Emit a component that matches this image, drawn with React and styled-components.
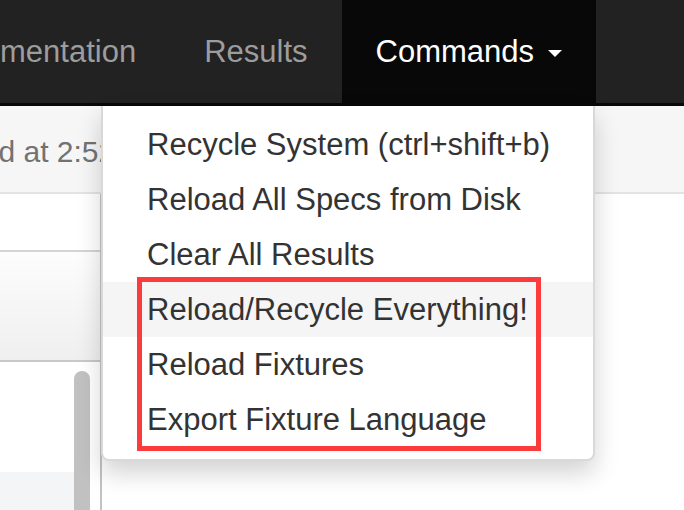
import styled, { createGlobalStyle } from "styled-components";

const commands = [
  "Recycle System (ctrl+shift+b)",
  "Reload All Specs from Disk",
  "Clear All Results",
  "Reload/Recycle Everything!",
  "Reload Fixtures",
  "Export Fixture Language",
];

const App = () => {
  return (
    <Page>
      <GlobalStyle />
      <Navbar>
        <NavItem>Documentation</NavItem>
        <NavItem>Results</NavItem>
        <NavItem $active>
          Commands
          <Caret />
          <DropdownMenu>
            {commands.map((label, i) => (
              <MenuItem key={label} $hover={i === 3}>
                {label}
              </MenuItem>
            ))}
            <Highlight />
          </DropdownMenu>
        </NavItem>
      </Navbar>
      <StatusBar>
        <StatusText>Loaded at 2:52 PM</StatusText>
      </StatusBar>
      <Body>
        <Sidebar>
          <SideRow />
          <SideHeader />
          <SideList>
            <ListColumn>
              <ListItem />
              <ListItem $alt />
            </ListColumn>
            <ScrollTrack>
              <ScrollThumb />
            </ScrollTrack>
          </SideList>
        </Sidebar>
        <Main />
      </Body>
    </Page>
  );
};

const GlobalStyle = createGlobalStyle`
  body {
    margin: 0;
    overflow: hidden;
    font-family: "Liberation Sans", Arial, sans-serif;
  }
`;

const Page = styled.div`
  display: flex;
  flex-direction: column;
  min-height: 100vh;
  background: #fff;
`;

// dark top navigation, items pushed to the right
const Navbar = styled.nav`
  position: relative;
  z-index: 10;
  display: flex;
  justify-content: flex-end;
  height: 103px;
  padding-right: 88px;
  background: #222;
  border-bottom: 3px solid #080808;
  overflow: visible;
  white-space: nowrap;
`;

const NavItem = styled.div`
  position: relative;
  display: flex;
  align-items: center;
  flex-shrink: 0;
  padding: 0 34px;
  font-size: 31px;
  color: ${(p) => (p.$active ? "#fff" : "#9d9d9d")};
  background: ${(p) => (p.$active ? "#080808" : "transparent")};
`;

const Caret = styled.span`
  margin-left: 14px;
  margin-top: 3px;
  width: 0;
  height: 0;
  border-left: 7px solid transparent;
  border-right: 7px solid transparent;
  border-top: 7px solid #fff;
`;

const DropdownMenu = styled.div`
  position: absolute;
  top: calc(100% + 3px);
  right: 1px;
  width: 490px;
  padding: 11px 0 12px;
  background: #fff;
  border: 2px solid rgba(0, 0, 0, 0.15);
  border-top: none;
  border-radius: 0 0 8px 8px;
  box-shadow: 0 12px 24px rgba(0, 0, 0, 0.175);
`;

const MenuItem = styled.div`
  display: flex;
  align-items: center;
  height: 55px;
  padding-left: 44px;
  font-size: 31px;
  color: #333;
  background: ${(p) => (p.$hover ? "#f5f5f5" : "transparent")};
`;

// red annotation drawn over the last three commands
const Highlight = styled.div`
  position: absolute;
  left: 34px;
  top: 171px;
  width: 394px;
  height: 164px;
  border: 5px solid #fc3c3c;
`;

const StatusBar = styled.div`
  display: flex;
  align-items: center;
  height: 86px;
  background: #f6f6f6;
  border-bottom: 2px solid #e3e3e3;
  overflow: hidden;
`;

const StatusText = styled.span`
  margin-left: -85px;
  margin-top: 6px;
  font-size: 30px;
  color: #727272;
  white-space: nowrap;
`;

const Body = styled.div`
  flex: 1;
  display: flex;
`;

const Sidebar = styled.aside`
  display: flex;
  flex-direction: column;
  width: 100px;
  border-right: 2px solid #c2c2c2;
`;

const SideRow = styled.div`
  height: 56px;
  background: #fff;
  border-bottom: 2px solid #d4d4d4;
`;

const SideHeader = styled.div`
  height: 108px;
  background: linear-gradient(#fdfdfd, #efefef);
  border-bottom: 2px solid #c8c8c8;
`;

const SideList = styled.div`
  flex: 1;
  display: flex;
`;

const ListColumn = styled.div`
  display: flex;
  flex-direction: column;
  width: 74px;
`;

const ListItem = styled.div`
  height: ${(p) => (p.$alt ? "auto" : "110px")};
  flex: ${(p) => (p.$alt ? 1 : "none")};
  background: ${(p) => (p.$alt ? "#f4f5f7" : "#fff")};
`;

const ScrollTrack = styled.div`
  display: flex;
  width: 16px;
  padding-top: 9px;
`;

const ScrollThumb = styled.div`
  flex: 1;
  background: #c1c1c1;
  border-radius: 8px 8px 0 0;
`;

const Main = styled.main`
  flex: 1;
  background: #fff;
`;

export default App;
